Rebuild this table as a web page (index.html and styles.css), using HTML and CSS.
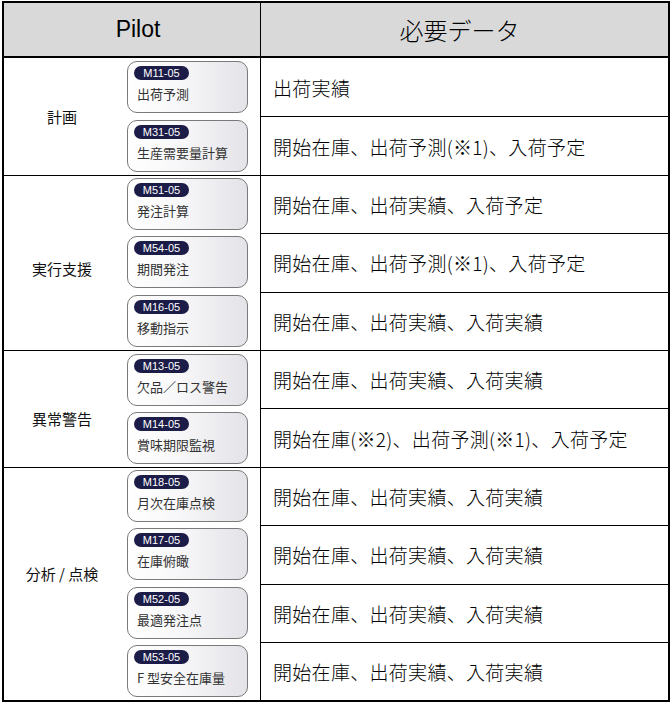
FILE: index.html
```html
<!DOCTYPE html>
<html lang="ja">
<head>
<meta charset="utf-8">
<title>Pilot 必要データ</title>
<link rel="stylesheet" href="styles.css">
</head>
<body>
<table class="sheet">
  <colgroup>
    <col class="c-cat">
    <col class="c-mod">
    <col class="c-data">
  </colgroup>
  <thead>
    <tr>
      <th colspan="2" class="h-pilot">Pilot</th>
      <th class="h-data">必要データ</th>
    </tr>
  </thead>
  <tbody class="group">
    <tr class="row">
      <td class="cat" rowspan="2">計画</td>
      <td class="mod"><div class="card"><span class="badge">M11-05</span><span class="name">出荷予測</span></div></td>
      <td class="data">出荷実績</td>
    </tr>
    <tr class="row">
      <td class="mod"><div class="card"><span class="badge">M31-05</span><span class="name">生産需要量計算</span></div></td>
      <td class="data">開始在庫、出荷予測(※1)、入荷予定</td>
    </tr>
  </tbody>
  <tbody class="group">
    <tr class="row">
      <td class="cat cat-2" rowspan="3">実行支援</td>
      <td class="mod"><div class="card"><span class="badge">M51-05</span><span class="name">発注計算</span></div></td>
      <td class="data">開始在庫、出荷実績、入荷予定</td>
    </tr>
    <tr class="row">
      <td class="mod"><div class="card"><span class="badge">M54-05</span><span class="name">期間発注</span></div></td>
      <td class="data">開始在庫、出荷予測(※1)、入荷予定</td>
    </tr>
    <tr class="row">
      <td class="mod"><div class="card"><span class="badge">M16-05</span><span class="name">移動指示</span></div></td>
      <td class="data">開始在庫、出荷実績、入荷実績</td>
    </tr>
  </tbody>
  <tbody class="group">
    <tr class="row">
      <td class="cat cat-3" rowspan="2">異常警告</td>
      <td class="mod"><div class="card"><span class="badge">M13-05</span><span class="name">欠品／ロス警告</span></div></td>
      <td class="data">開始在庫、出荷実績、入荷実績</td>
    </tr>
    <tr class="row">
      <td class="mod"><div class="card"><span class="badge">M14-05</span><span class="name">賞味期限監視</span></div></td>
      <td class="data">開始在庫(※2)、出荷予測(※1)、入荷予定</td>
    </tr>
  </tbody>
  <tbody class="group">
    <tr class="row">
      <td class="cat cat-4" rowspan="4">分析 / 点検</td>
      <td class="mod"><div class="card"><span class="badge">M18-05</span><span class="name">月次在庫点検</span></div></td>
      <td class="data">開始在庫、出荷実績、入荷実績</td>
    </tr>
    <tr class="row">
      <td class="mod"><div class="card"><span class="badge">M17-05</span><span class="name">在庫俯瞰</span></div></td>
      <td class="data">開始在庫、出荷実績、入荷実績</td>
    </tr>
    <tr class="row">
      <td class="mod"><div class="card"><span class="badge">M52-05</span><span class="name">最適発注点</span></div></td>
      <td class="data">開始在庫、出荷実績、入荷実績</td>
    </tr>
    <tr class="row">
      <td class="mod"><div class="card"><span class="badge">M53-05</span><span class="name">F 型安全在庫量</span></div></td>
      <td class="data">開始在庫、出荷実績、入荷実績</td>
    </tr>
  </tbody>
</table>
</body>
</html>
```
FILE: styles.css
```css
* {
  box-sizing: border-box;
}

body {
  margin: 0;
  background: #fff;
  color: #000;
  font-family: "Noto Sans CJK JP", "Liberation Sans", sans-serif;
}

.sheet {
  margin: 1px 0 0 2px;
  width: 668px;
  border-collapse: separate;
  border-spacing: 0;
  table-layout: fixed;
  border: 2px solid #000;
}

.c-cat { width: 116px; }
.c-mod { width: 140px; }
.c-data { width: 408px; }

th {
  height: 55px;
  padding: 0;
  background: #d9d9d9;
  border-bottom: 2px solid #000;
  font-weight: normal;
  font-size: 23px;
  text-align: center;
  vertical-align: middle;
}

.h-pilot {
  font-family: "Liberation Sans", Arial, sans-serif;
  padding-left: 12px;
}

.h-data {
  border-left: 1px solid #000;
  padding-right: 10px;
  font-size: 24px;
  font-weight: 300;
}

.row {
  height: 58.4px;
}

td {
  padding: 0;
  vertical-align: middle;
}

.data {
  border-left: 1px solid #000;
  border-top: 1px solid #000;
  padding-left: 12px;
  font-size: 19px;
  font-weight: 300;
  letter-spacing: 0.3px;
  color: #000;
  white-space: nowrap;
}

.group:first-of-type .row:first-child .data {
  border-top: none;
}

.group + .group .row:first-child td {
  border-top: 1px solid #000;
}

.cat {
  font-size: 15px;
  font-weight: 400;
  text-align: center;
  color: #111;
  white-space: nowrap;
}

.cat-2 { padding-top: 12px; }
.cat-3 { padding-top: 20px; }
.cat-4 { padding-bottom: 22px; }

.mod {
  padding-left: 7px;
}

.card {
  width: 121px;
  height: 52px;
  border: 1.5px solid #7a7a7a;
  border-radius: 10px;
  background: linear-gradient(90deg, #ffffff 0%, #f7f7f9 45%, #e3e3e8 100%);
  padding: 4px 0 0 6px;
}

.badge {
  display: block;
  width: 55px;
  height: 14px;
  border-radius: 7px;
  background: #1c1c48;
  color: #fff;
  font-family: "Liberation Sans", Arial, sans-serif;
  font-size: 11px;
  line-height: 14px;
  text-align: center;
}

.name {
  display: block;
  margin-top: 6px;
  padding-left: 3px;
  font-size: 13px;
  font-weight: 400;
  line-height: 16px;
  color: #333;
  white-space: nowrap;
}
```
